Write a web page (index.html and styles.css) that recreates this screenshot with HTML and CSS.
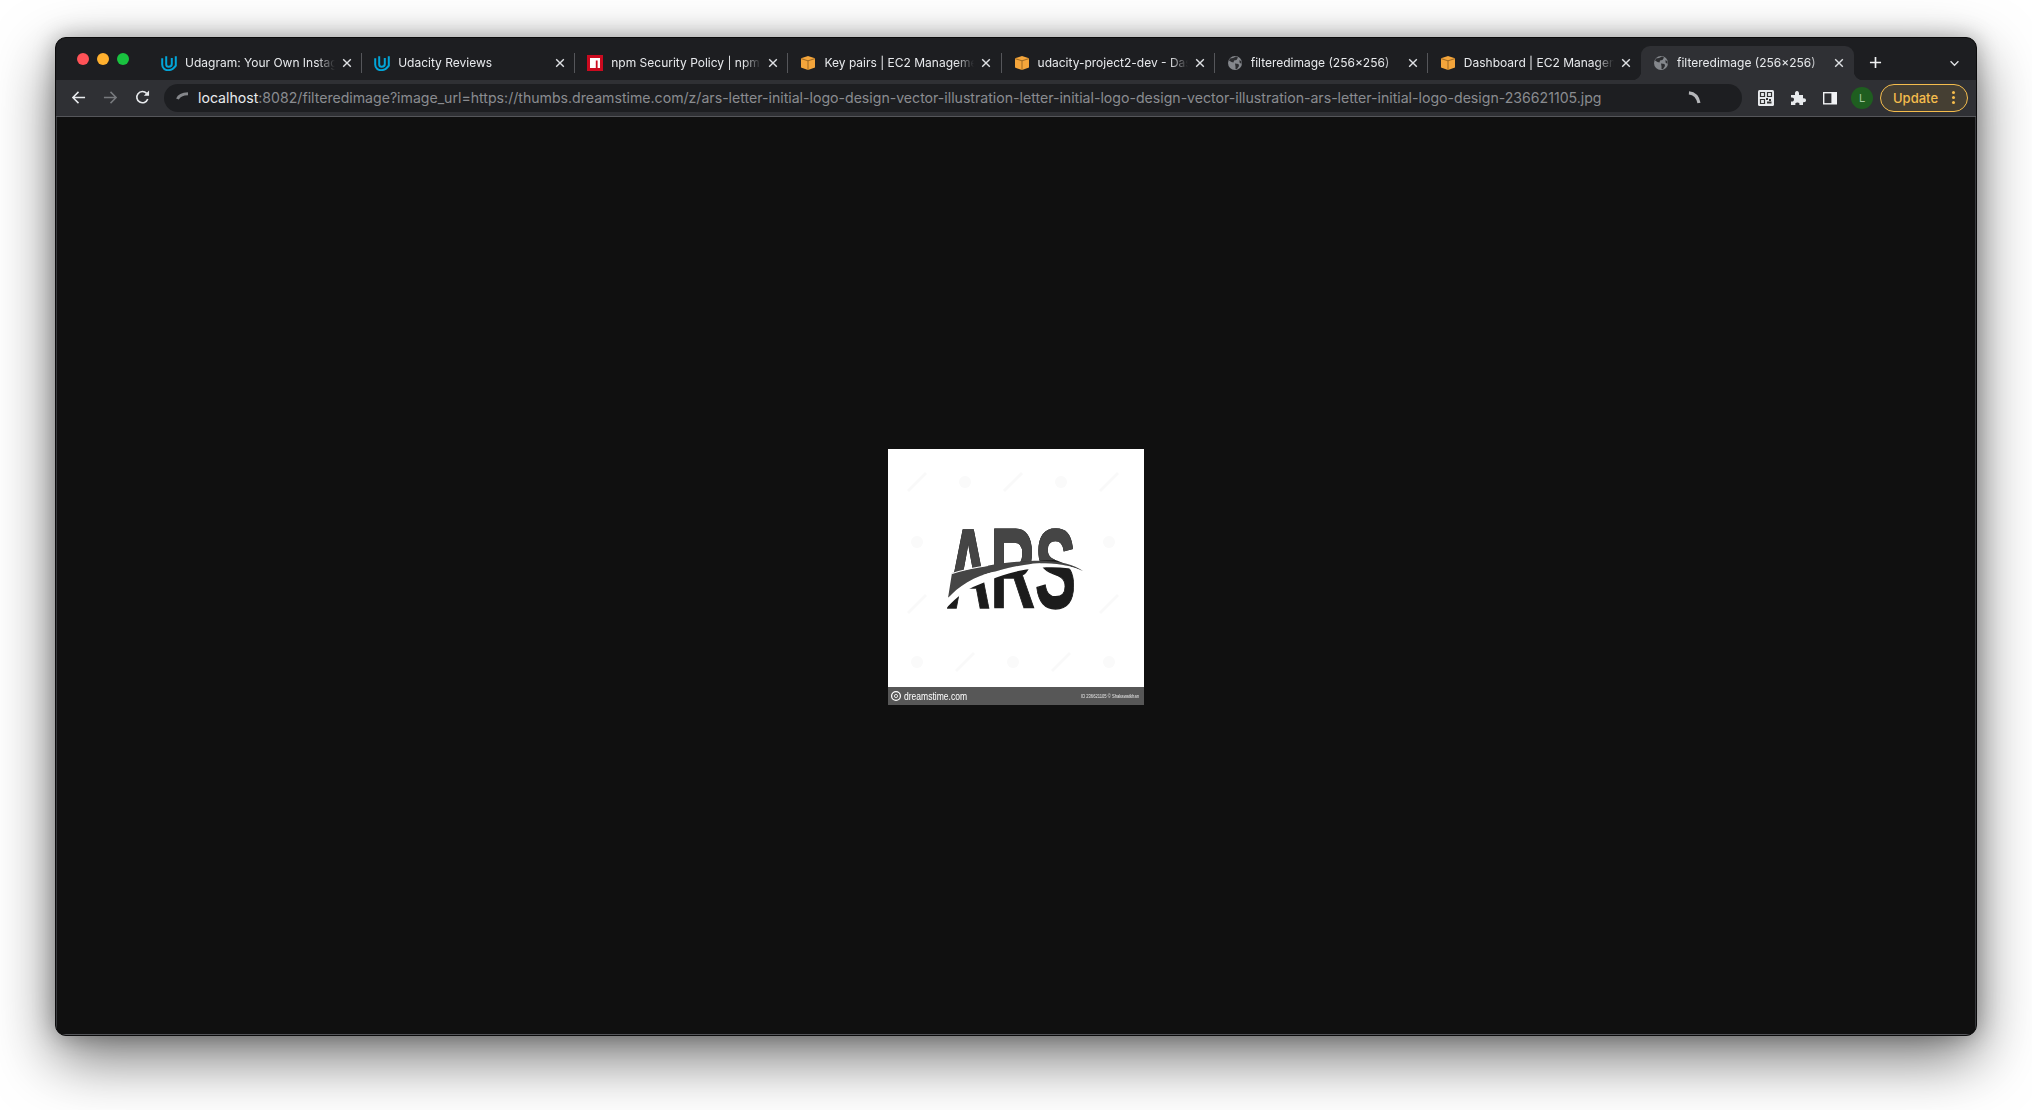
FILE: index.html
```html
<!DOCTYPE html>
<html lang="en">
<head>
    <meta charset="UTF-8" />
    <title>filteredimage (256×256)</title>
    <link rel="stylesheet" href="styles.css">
</head>
<body>

<svg class="defs" width="0" height="0">
    <symbol id="udacity" viewBox="0 0 16 16">
        <path d="M1.2 3.2V9.4C1.2 13 4.2 15.2 7 15.2C10.6 15.2 13 13.2 14.8 10.6V1.2" fill="none" stroke="#02a5d8" stroke-width="2"/>
        <path d="M5.2 1.2V9.2C5.2 11 6.2 11.8 7.6 11.8C9.2 11.8 10.8 10.8 10.8 9V3" fill="none" stroke="#02a5d8" stroke-width="2"/>
    </symbol>
    <symbol id="box" viewBox="0 0 16 16">
        <path d="M8 1L15 3.2V12.6L8 15L1 12.6V3.2Z" fill="#f4a53b"/>
        <path d="M1 3.6L8 5.8L15 3.6M8 5.8V15" fill="none" stroke="#8a5a1c" stroke-width="0.8"/>
    </symbol>
    <symbol id="globe" viewBox="0 0 16 16">
        <circle cx="8" cy="8" r="7" fill="#84878c"/>
        <path d="M3 3.5L6 3L9 1.5L11 2.5L9.5 5L7 5.5L6.5 7.5L4.5 7L2 5.5ZM8 8.5L11.5 9L12 11L10 14L8.5 14L8.5 11.5ZM12.5 5L14.5 6.5L14.5 9L12.5 7.5Z" fill="#2c2d30"/>
    </symbol>
    <symbol id="close" viewBox="0 0 10 10">
        <path d="M1.2 1.2L8.8 8.8M8.8 1.2L1.2 8.8" fill="none" stroke="#dfe1e4" stroke-width="1.4"/>
    </symbol>
    <symbol id="mark-line" viewBox="0 0 30 30">
        <path d="M6 24L24 6" stroke="#f9f9f9" stroke-width="3"/>
    </symbol>
    <symbol id="mark-dot" viewBox="0 0 30 30">
        <circle cx="15" cy="15" r="6" fill="#fafafa"/>
    </symbol>
</svg>

<div class="window">
    <div class="tabstrip">
        <div class="lights">
            <span class="light red"></span>
            <span class="light yellow"></span>
            <span class="light green"></span>
        </div>

        <div class="tab">
            <svg class="favicon"><use href="#udacity"/></svg>
            <span class="tab-title">Udagram: Your Own Instag</span>
            <svg class="tab-close"><use href="#close"/></svg>
        </div>
        <div class="tab">
            <svg class="favicon"><use href="#udacity"/></svg>
            <span class="tab-title">Udacity Reviews</span>
            <svg class="tab-close"><use href="#close"/></svg>
        </div>
        <div class="tab">
            <svg class="favicon" viewBox="0 0 16 16">
                <rect width="16" height="16" fill="#cb0a1f"/>
                <path d="M3 3H13V13H10.6V5.4H8.8V13H3Z" fill="#fff"/>
            </svg>
            <span class="tab-title">npm Security Policy | npm</span>
            <svg class="tab-close"><use href="#close"/></svg>
        </div>
        <div class="tab">
            <svg class="favicon"><use href="#box"/></svg>
            <span class="tab-title">Key pairs | EC2 Manageme</span>
            <svg class="tab-close"><use href="#close"/></svg>
        </div>
        <div class="tab">
            <svg class="favicon"><use href="#box"/></svg>
            <span class="tab-title">udacity-project2-dev - Das</span>
            <svg class="tab-close"><use href="#close"/></svg>
        </div>
        <div class="tab">
            <svg class="favicon"><use href="#globe"/></svg>
            <span class="tab-title">filteredimage (256×256)</span>
            <svg class="tab-close"><use href="#close"/></svg>
        </div>
        <div class="tab no-sep">
            <svg class="favicon"><use href="#box"/></svg>
            <span class="tab-title">Dashboard | EC2 Managem</span>
            <svg class="tab-close"><use href="#close"/></svg>
        </div>
        <div class="tab active">
            <svg class="favicon"><use href="#globe"/></svg>
            <span class="tab-title">filteredimage (256×256)</span>
            <svg class="tab-close"><use href="#close"/></svg>
        </div>

        <svg class="new-tab" viewBox="0 0 14 14">
            <path d="M7 1V13M1 7H13" stroke="#f1f2f4" stroke-width="1.8"/>
        </svg>
        <svg class="tab-search" viewBox="0 0 12 8">
            <path d="M1.5 1.5L6 6L10.5 1.5" fill="none" stroke="#dfe1e4" stroke-width="1.5"/>
        </svg>
    </div>

    <div class="toolbar">
        <svg class="nav-icon" viewBox="0 0 16 16">
            <path d="M15 8H2M8 2L2 8L8 14" fill="none" stroke="#e8eaed" stroke-width="1.6"/>
        </svg>
        <svg class="nav-icon" viewBox="0 0 16 16">
            <path d="M1 8H14M8 2L14 8L8 14" fill="none" stroke="#77797d" stroke-width="1.6"/>
        </svg>
        <svg class="nav-icon" viewBox="0 0 16 16">
            <path d="M13.6 9.6A6 6 0 1 1 12.4 3.6" fill="none" stroke="#e8eaed" stroke-width="1.7"/>
            <path d="M9.4 6H15V0.6Z" fill="#e8eaed"/>
        </svg>

        <div class="omnibox">
            <svg class="spinner-small" viewBox="0 0 14 8">
                <path d="M1.5 7C3 3.5 6.5 2 12 1.8" fill="none" stroke="#85878b" stroke-width="3"/>
            </svg>
            <div class="url"><span class="url-host">localhost</span>:8082/filteredimage?image_url=https://thumbs.dreamstime.com/z/ars-letter-initial-logo-design-vector-illustration-letter-initial-logo-design-vector-illustration-ars-letter-initial-logo-design-236621105.jpg</div>
            <svg class="spinner-big" viewBox="0 0 14 14">
                <path d="M1 2C6 2.5 10.5 6 11.8 13" fill="none" stroke="#b5b6b9" stroke-width="3.4"/>
            </svg>
        </div>

        <svg class="ext-icon" viewBox="0 0 16 16">
            <rect width="16" height="16" rx="1.5" fill="#e8eaed"/>
            <path d="M2.5 2.5H6.5V6.5H2.5ZM9.5 2.5H13.5V6.5H9.5ZM2.5 9.5H6.5V13.5H2.5Z" fill="none" stroke="#333" stroke-width="1.2"/>
            <path d="M8 8H10V10H8ZM11 9H13V11H11ZM9 11.5H13.5V13.5H9Z" fill="#333"/>
        </svg>
        <svg class="ext-icon" viewBox="0 0 16 16">
            <path d="M1 5H5C4.6 2.6 5.6 1 7 1C8.4 1 9.4 2.6 9 5H13V8.4C15 8 16 9 16 10.3C16 11.6 15 12.6 13 12.2V15H9.4C9.8 13.4 9 12.6 7.4 12.6C5.8 12.6 5 13.4 5.4 15H1V11.4C3 11.8 4 10.8 4 9.4C4 8 3 7.2 1 7.6Z" fill="#e8eaed"/>
        </svg>
        <svg class="ext-icon" viewBox="0 0 16 16">
            <rect x="1" y="2" width="14" height="12.5" fill="#f1f2f4"/>
            <rect x="2.4" y="3.4" width="7" height="9.7" fill="#2e2f33"/>
        </svg>
        <div class="avatar">L</div>
        <div class="update">
            <span class="update-label">Update</span>
            <span class="update-dots"><i></i><i></i><i></i></span>
        </div>
    </div>

    <div class="viewer">
        <svg class="picture" viewBox="0 0 256 256" width="256" height="256">
            <defs>
                <clipPath id="logo-top">
                    <path d="M0 0H256V122C190 106 120 106 60 132H0Z"/>
                </clipPath>
                <filter id="soft"><feGaussianBlur stdDeviation="0.45"/></filter>
            </defs>
            <rect width="256" height="256" fill="#fff"/>

            <use href="#mark-line" x="14" y="18" width="30" height="30"/>
            <use href="#mark-dot" x="62" y="18" width="30" height="30"/>
            <use href="#mark-line" x="110" y="18" width="30" height="30"/>
            <use href="#mark-dot" x="158" y="18" width="30" height="30"/>
            <use href="#mark-line" x="206" y="18" width="30" height="30"/>
            <use href="#mark-dot" x="14" y="78" width="30" height="30"/>
            <use href="#mark-dot" x="206" y="78" width="30" height="30"/>
            <use href="#mark-line" x="14" y="140" width="30" height="30"/>
            <use href="#mark-line" x="206" y="140" width="30" height="30"/>
            <use href="#mark-dot" x="14" y="198" width="30" height="30"/>
            <use href="#mark-line" x="62" y="198" width="30" height="30"/>
            <use href="#mark-dot" x="110" y="198" width="30" height="30"/>
            <use href="#mark-line" x="158" y="198" width="30" height="30"/>
            <use href="#mark-dot" x="206" y="198" width="30" height="30"/>

            <g filter="url(#soft)">
                <text class="logo-letters logo-dark" transform="translate(58 159) scale(0.545 1)">ARS</text>
                <g clip-path="url(#logo-top)">
                    <text class="logo-letters logo-grey" transform="translate(58 159) scale(0.545 1)">ARS</text>
                </g>
                <path d="M60 149C70 138 85 127 109 122C125 117 140 115 150 114.5C170 113 185 118 195 122C185 115 170 111 142 112C115 113 90 118 64 124Z" fill="#454545"/>
                <path d="M64 124.5C75 121 90 118 100 116.5" fill="none" stroke="#fff" stroke-width="1.2"/>
                <path d="M57 161L60 149C70 138 85 127 109 122C125 117 140 115 150 114.5C170 113 185 118 195 122C180 118 160 117 142 120C125 122 105 129 85 138C75 143 65 151 57 161Z" fill="#fff"/>
            </g>

            <rect y="238" width="256" height="18" fill="#575757"/>
            <g filter="url(#soft)">
                <circle cx="8" cy="247" r="4.4" fill="none" stroke="#fff" stroke-width="1.2"/>
                <circle cx="8" cy="247" r="1.6" fill="none" stroke="#fff" stroke-width="0.8"/>
                <text class="stock-name" x="16" y="250.5" textLength="63" lengthAdjust="spacingAndGlyphs">dreamstime.com</text>
                <text class="stock-id" x="193" y="248.8" textLength="58" lengthAdjust="spacingAndGlyphs">ID 236621105 © Shakawatkhan</text>
            </g>
        </svg>
    </div>
</div>

</body>
</html>
```

FILE: styles.css
```css
* {
    box-sizing: border-box;
}
html, body {
    margin: 0;
    height: 100%;
    background-color: #fff;
}
body {
    padding: 37px 55px 74px 55px;
    overflow: hidden;
    font-family: Inter, 'Noto Sans', sans-serif;
}
.defs {
    display: block;
    height: 0;
}
.window {
    height: 999px;
    display: flex;
    flex-direction: column;
    border-radius: 11px;
    overflow: hidden;
    background-color: #101010;
    border: 1px solid #0b0b0c;
    box-shadow: 0 22px 60px rgba(0, 0, 0, 0.55), 0 0 22px rgba(0, 0, 0, 0.28);
}

/* tab strip */
.tabstrip {
    height: 42px;
    flex: none;
    display: flex;
    align-items: flex-end;
    position: relative;
    z-index: 0;
    background-color: #1d1e21;
}
.lights {
    width: 93px;
    height: 100%;
    flex: none;
    display: flex;
    gap: 8px;
    padding: 15px 0 0 21px;
}
.light {
    width: 12px;
    height: 12px;
    border-radius: 50%;
}
.red {
    background-color: #ff5257;
}
.yellow {
    background-color: #ffb02e;
}
.green {
    background-color: #19c23f;
}
.tab {
    width: 213.15px;
    height: 34px;
    flex: none;
    position: relative;
    display: flex;
    align-items: center;
    padding: 0 12px 0 12px;
    border-radius: 9px 9px 0 0;
}
.tab::after {
    content: "";
    position: absolute;
    right: 0;
    top: 7px;
    height: 20px;
    width: 1px;
    background-color: #55565a;
}
.tab.no-sep::after {
    display: none;
}
.favicon {
    width: 16px;
    height: 16px;
    flex: none;
}
.tab-title {
    width: 150px;
    flex: none;
    margin: 0 0 1px 8px;
    font-size: 12px;
    color: #e8eaed;
    white-space: nowrap;
    -webkit-mask-image: linear-gradient(to right, #000 132px, transparent 150px);
    mask-image: linear-gradient(to right, #000 132px, transparent 150px);
}
.tab-close {
    width: 10px;
    height: 10px;
    flex: none;
    margin-left: 7px;
}
.tab.active {
    background-color: #2f3034;
}
.tab.active::after {
    display: none;
}
.tab.active::before {
    content: "";
    position: absolute;
    bottom: 0;
    left: -9px;
    right: -9px;
    height: 9px;
    z-index: -1;
    background:
        radial-gradient(circle at 0 0, transparent 9px, #2f3034 9.5px) left bottom / 9px 9px no-repeat,
        radial-gradient(circle at 100% 0, transparent 9px, #2f3034 9.5px) right bottom / 9px 9px no-repeat;
}
.new-tab {
    width: 13px;
    height: 13px;
    flex: none;
    margin: 0 0 11px 15px;
}
.tab-search {
    width: 11px;
    height: 7px;
    flex: none;
    margin: 0 0 13px 67px;
}

/* toolbar */
.toolbar {
    height: 37px;
    flex: none;
    display: flex;
    align-items: center;
    padding: 0 7px 1px 15px;
    background-color: #2f3034;
    border-bottom: 1px solid #55565a;
}
.nav-icon {
    width: 15px;
    height: 15px;
    flex: none;
    margin-right: 17px;
}
.omnibox {
    width: 1578px;
    height: 28px;
    flex: none;
    margin-left: -3px;
    display: flex;
    align-items: center;
    padding-left: 12px;
    border-radius: 14px;
    background-color: #1d1e21;
}
.spinner-small {
    width: 14px;
    height: 8px;
    flex: none;
    margin-bottom: 3px;
}
.url {
    width: 1478px;
    flex: none;
    margin-left: 8px;
    font-size: 14.11px;
    color: #8a8c90;
    white-space: nowrap;
}
.url-host {
    color: #e8eaed;
}
.spinner-big {
    width: 13px;
    height: 13px;
    flex: none;
    margin-left: 12px;
}
.ext-icon {
    width: 16px;
    height: 16px;
    flex: none;
    margin-left: 16px;
}
.ext-icon:first-of-type {
    margin-left: 0;
}
.avatar {
    width: 22px;
    height: 22px;
    flex: none;
    margin-left: 13px;
    border-radius: 50%;
    background-color: #1f5e20;
    color: #9fc79f;
    font-size: 11px;
    line-height: 22px;
    text-align: center;
}
.update {
    width: 88px;
    height: 28px;
    flex: none;
    margin-left: 7px;
    display: flex;
    align-items: center;
    padding-left: 12px;
    border: 1px solid #f5bd4d;
    border-radius: 14px;
    background-color: #453f33;
}
.update-label {
    color: #f5bd4d;
    font-size: 13px;
    font-weight: 500;
}
.update-dots {
    display: flex;
    flex-direction: column;
    gap: 2px;
    margin-left: 14px;
}
.update-dots i {
    width: 3px;
    height: 3px;
    border-radius: 50%;
    background-color: #f5bd4d;
}

/* image viewer */
.viewer {
    flex: 1;
    display: flex;
    align-items: center;
    justify-content: center;
    padding-top: 2px;
    background-color: #101010;
    box-shadow: inset 1px 0 0 #38393c, inset -1px 0 0 #38393c, inset 0 -1px 0 #55565a;
}
.picture {
    display: block;
}
.logo-letters {
    font-family: 'Liberation Sans', sans-serif;
    font-weight: bold;
    font-size: 113px;
    stroke-width: 1.4px;
}
.logo-dark {
    fill: #1c1c1c;
    stroke: #1c1c1c;
}
.logo-grey {
    fill: #454545;
    stroke: #454545;
}
.stock-name {
    font-family: 'Liberation Sans', sans-serif;
    font-size: 10px;
    fill: #fff;
}
.stock-id {
    font-family: 'Liberation Sans', sans-serif;
    font-size: 4.5px;
    fill: #e6e6e6;
}
```
